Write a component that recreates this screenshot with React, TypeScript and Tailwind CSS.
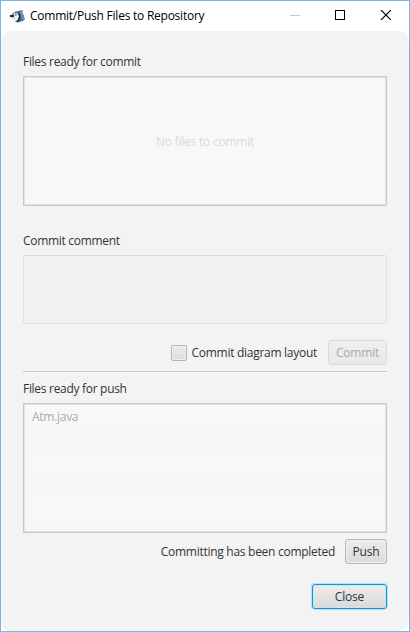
import React from "react";

function BirdIcon() {
  return (
    <svg width="16" height="13" viewBox="0 0 16 13" className="block shrink-0">
      <path d="M3.4 3.8 L6 1.8 L9.5 1 L13.8 0 L13.2 2.4 L14.6 5 L15.8 9.4 L14 10.8 L9.4 12.4 L6.4 12 L5.4 9 Z" fill="#456a8e" />
      <path d="M10.8 2.4 L13 1 L12.8 2.8 L14.2 5.6 L15.2 9 L12.6 9.8 L12.4 6 Z" fill="#6f98b9" />
      <path d="M4 4.4 L5.6 3.2 L8.6 3.2 L10.2 5.4 L9.4 8.8 L7.2 11.4 L5.2 10.6 L6 8.6 L4.4 7.6 Z" fill="#f0f2f4" />
      <path d="M0 6 L2.2 4.8 L4.4 4.6 L5.2 5.8 L4.6 6.9 L1.8 6.9 Z" fill="#24272c" />
      <path d="M2 7.3 L4.4 7.2 L4.8 8 L2.8 8.2 Z" fill="#8b8f94" />
      <path d="M5.6 4.7 L7.4 4.2 L7.8 5.2 L6.2 5.5 Z" fill="#20262e" />
      <path d="M8.8 2.8 L10.1 3.2 L11.4 5.8 L10.8 8.8 L9 11.2 L7 12.2 L7.2 11.4 L9 9.4 L10 6.8 Z" fill="#20262e" />
    </svg>
  );
}

function TitleBar() {
  return (
    <header className="flex h-[30px] shrink-0 items-center pl-2 text-black">
      <BirdIcon />
      <h1 className="ml-[5px] flex-1 whitespace-nowrap text-[12px] leading-4 tracking-[-0.24px]">
        Commit/Push Files to Repository
      </h1>
      <svg width="101" height="10" viewBox="0 0 101 10" className="mr-[18px] mt-[-2px] block shrink-0" shapeRendering="crispEdges">
        <path d="M0 5.5H10" stroke="#c8c8c8" />
        <rect x="45.5" y="0.5" width="9" height="9" fill="none" stroke="#000" />
        <path d="M91 0L101 10M101 0L91 10" stroke="#000" strokeWidth="1.1" shapeRendering="auto" />
      </svg>
    </header>
  );
}

function Label({ children }: { children: React.ReactNode }) {
  return <div className="h-4 whitespace-nowrap leading-4">{children}</div>;
}

export default function App() {
  return (
    <div className="flex h-[632px] w-[410px] flex-col border border-[#7eb4ee] bg-white font-['Open_Sans','Noto_Sans',sans-serif] text-[12px] tracking-[-0.3px] text-[#333]">
      <TitleBar />
      <main className="flex flex-1 flex-col rounded-[10px] bg-[#f3f3f3] pl-[22px] pr-[22px] pt-[23px]">
        <Label>Files ready for commit</Label>
        <div className="mt-[6px] flex h-[130px] shrink-0 items-center justify-center border border-[#c8c8c8] bg-[#f8f8f8] pt-[2px] tracking-[-0.22px] text-[#dadada] shadow-[inset_0_0_0_1px_#e2e2e2]">
          No files to commit
        </div>

        <div className="mt-[27px]">
          <Label>Commit comment</Label>
        </div>
        <div className="mt-[6px] h-[69px] shrink-0 rounded-[3px] border border-[#e1e1e1] border-t-[#dcdcdc] bg-[#f2f2f2]" />

        <div className="mt-4 flex h-[25px] shrink-0 items-center justify-end">
          <span className="mt-px size-4 rounded-[2px] border border-[#b4b4b4] bg-linear-to-b from-[#ebebeb] to-[#dcdcdc] shadow-[inset_0_0_0_1px_#f0f0f0]" />
          <span className="ml-[5px] whitespace-nowrap tracking-[-0.28px]">Commit diagram layout</span>
          <button className="ml-[11px] h-[25px] w-[59px] rounded-[3px] border border-[#dadada] bg-linear-to-b from-[#efefef] to-[#e9e9e9] tracking-[-0.2px] text-[#aaa]">
            Commit
          </button>
        </div>

        <div className="mt-[6px] h-[2px] shrink-0 border-b border-t border-b-[#f8f8f8] border-t-[#c8c8c8]" />

        <div className="mt-2">
          <Label>Files ready for push</Label>
        </div>
        <div className="mt-[6px] flex h-[130px] shrink-0 flex-col border border-[#c8c8c8] bg-[#f6f6f6] p-px shadow-[inset_0_0_0_1px_#e2e2e2]">
          <div className="h-[23px] shrink-0 bg-[#f8f8f8] pl-[7px] leading-[24px] tracking-[-0.28px] text-[#aaa]">Atm.java</div>
          <div className="h-[23px] shrink-0 bg-[#f6f6f6]" />
          <div className="h-[23px] shrink-0 bg-[#f8f8f8]" />
          <div className="h-[23px] shrink-0 bg-[#f6f6f6]" />
          <div className="h-[23px] shrink-0 bg-[#f8f8f8]" />
        </div>

        <div className="mt-[6px] flex h-[25px] shrink-0 items-center justify-end">
          <span className="whitespace-nowrap tracking-[-0.28px]">Committing has been completed</span>
          <button className="ml-[10px] h-[25px] w-[42px] rounded-[3px] border border-[#b5b5b5] bg-linear-to-b from-[#ececec] to-[#dadada] tracking-[-0.2px] shadow-[inset_0_0_0_1px_#f0f0f0]">
            Push
          </button>
        </div>

        <div className="mt-5 flex justify-end">
          <button className="h-[25px] w-[75px] rounded-[3px] border border-[#039ed3] bg-linear-to-b from-[#ececec] to-[#dadada] tracking-[-0.2px] shadow-[0_0_0_1px_#b9e2f0,inset_0_0_0_1px_#c9e6f0]">
            Close
          </button>
        </div>
      </main>
    </div>
  );
}
